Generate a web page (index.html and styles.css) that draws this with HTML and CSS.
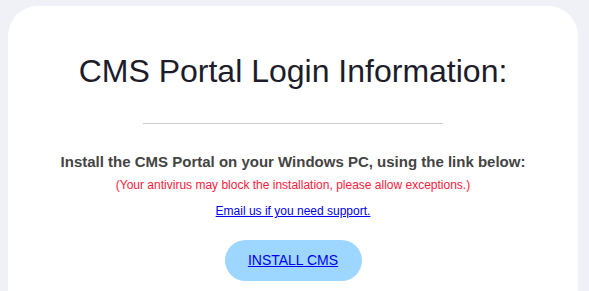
FILE: index.html
```html
<!DOCTYPE html>
<html>
<head>
<meta charset="utf-8">
<title>CMS Portal Login Information</title>
<link rel="stylesheet" href="styles.css">
</head>
<body>
    <div class="card">
        <h1 class="title">CMS Portal Login Information:</h1>
        <hr class="divider">
        <p class="lead">Install the CMS Portal on your Windows PC, using the link below:</p>
        <p class="warning">(Your antivirus may block the installation, please allow exceptions.)</p>
        <p class="support"><a href="#">Email us if you need support.</a></p>
        <div class="actions">
            <a class="install" href="#">INSTALL CMS</a>
        </div>
    </div>
</body>
</html>
```

FILE: styles.css
```css
html, body {
    margin: 0;
    height: 100%;
}
body {
    background: #f0f1f6;
    padding: 6px 11px 0 8px;
    box-sizing: border-box;
    font-family: "Liberation Sans", Arial, sans-serif;
    overflow: hidden;
}
.card {
    background: #fff;
    border-radius: 30px 30px 0 0;
    height: 100%;
    box-sizing: border-box;
    padding-top: 47px;
    text-align: center;
}
.title {
    margin: 0;
    font-size: 32px;
    font-weight: normal;
    color: #1c1c2a;
}
.divider {
    width: 300px;
    margin: 33px auto 0;
    border: none;
    border-top: 1px solid #cccccc;
}
.lead {
    margin: 29px 0 0;
    font-size: 15px;
    font-weight: bold;
    color: #444;
}
.warning {
    margin: 8px 0 0;
    font-size: 12px;
    color: #ff1a3c;
}
.support {
    margin: 12px 0 0;
    font-size: 12px;
}
.support a {
    color: #0000ee;
}
.actions {
    margin-top: 22px;
}
.install {
    display: inline-block;
    width: 137px;
    height: 41px;
    line-height: 41px;
    box-sizing: border-box;
    border-radius: 21px;
    background: #9dd6ff;
    color: #0000ee;
    font-size: 14px;
}
```
